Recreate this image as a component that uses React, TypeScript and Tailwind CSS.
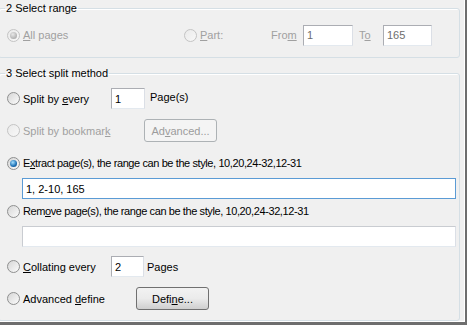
import React from 'react';

type RadioProps = { checked?: boolean; disabled?: boolean };

const Radio: React.FC<RadioProps> = ({ checked, disabled }) => (
  <span
    className={`relative inline-flex h-[13px] w-[13px] shrink-0 items-center justify-center rounded-full border ${
      disabled
        ? 'border-[#c4c4c4] bg-gradient-to-br from-[#eaeaea] to-[#f8f8f8]'
        : 'border-[#8e8f8f] bg-gradient-to-br from-[#d6d6d6] to-[#fbfbfb]'
    }`}
  >
    {checked && (
      <span
        className={`h-[7px] w-[7px] rounded-full ${
          disabled
            ? 'bg-[radial-gradient(circle_at_40%_35%,#e8e8e8,#9a9a9a)]'
            : 'bg-[radial-gradient(circle_at_40%_35%,#a6e0ff,#1b6fb4_60%,#0b3d73)]'
        }`}
      />
    )}
  </span>
);

const Label: React.FC<{ children: React.ReactNode; disabled?: boolean; className?: string }> = ({
  children,
  disabled,
  className = '',
}) => (
  <span className={`ml-[3px] whitespace-nowrap ${disabled ? 'text-[#a0a0a0]' : 'text-black'} ${className}`}>
    {children}
  </span>
);

const Input: React.FC<{ value?: string; className?: string; focused?: boolean; disabled?: boolean }> = ({
  value,
  className = '',
  focused,
  disabled,
}) => (
  <div
    className={`flex h-[21px] items-center border bg-white px-[3px] ${
      focused ? 'border-[#5b9bd5]' : 'border-[#abadb3] border-b-[#e3e9ef] border-r-[#dbdfe6]'
    } ${disabled ? 'text-[#6d6d6d]' : 'text-black'} ${className}`}
  >
    {value}
  </div>
);

const Btn: React.FC<{ children: React.ReactNode; disabled?: boolean }> = ({ children, disabled }) => (
  <div
    className={`flex h-[23px] w-[73px] items-center justify-center rounded-[3px] border ${
      disabled
        ? 'border-[#adb2b5] bg-[#f4f4f4] text-[#9c9c9c]'
        : 'border-[#707070] bg-gradient-to-b from-[#f2f2f2] via-[#ebebeb] to-[#cfcfcf] text-black'
    }`}
  >
    {children}
  </div>
);

const Group: React.FC<{ title: string; className?: string; children: React.ReactNode }> = ({
  title,
  className = '',
  children,
}) => (
  <fieldset
    className={`relative ml-[-2px] mr-[4px] rounded-[3px] border border-[#d5dfe5] shadow-[inset_1px_1px_0_#ffffff] ${className}`}
  >
    <legend className="ml-[6px] px-[1px] leading-[14px] text-black">{title}</legend>
    {children}
  </fieldset>
);

export default function App() {
  return (
    <div
      className="relative h-[325px] w-[467px] overflow-hidden bg-[#f0f0f0] text-[11px] leading-[14px]"
      style={{ fontFamily: '"Liberation Sans", Arial, sans-serif' }}
    >
      <div className="h-[322px] w-[465px] border-r border-b border-r-white border-b-white pt-[1px]">
        <Group title="2 Select range" className="h-[57px]">
          <div className="mt-[10px] flex h-[20px] items-center pl-[8px]">
            <div className="flex w-[177px] items-center">
              <Radio checked disabled />
              <Label disabled>
                <u>A</u>ll pages
              </Label>
            </div>
            <div className="flex w-[87px] items-center">
              <Radio disabled />
              <Label disabled>
                <u>P</u>art:
              </Label>
            </div>
            <span className="w-[32px] text-[#a0a0a0]">
              Fro<u>m</u>
            </span>
            <Input value="1" disabled className="w-[50px]" />
            <span className="ml-[6px] w-[24px] text-[#a0a0a0]">
              T<u>o</u>
            </span>
            <Input value="165" disabled className="w-[49px]" />
          </div>
        </Group>

        <Group title="3 Select split method" className="mt-[8px] h-[255px]">
          <div className="flex flex-col pl-[8px]">
            <div className="mt-[8px] flex h-[21px] items-center">
              <div className="flex w-[104px] items-center">
                <Radio />
                <Label>
                  Split by <u>e</u>very
                </Label>
              </div>
              <Input value="1" className="w-[34px]" />
              <span className="ml-[5px] -mt-[3px]">Page(s)</span>
            </div>
            <div className="mt-[10px] flex h-[23px] items-center">
              <div className="flex w-[137px] items-center">
                <Radio disabled />
                <Label disabled>
                  Split by bookmar<u>k</u>
                </Label>
              </div>
              <Btn disabled>
                Ad<u>v</u>anced...
              </Btn>
            </div>
            <div className="mt-[13px] flex h-[16px] items-center">
              <Radio checked />
              <Label className="tracking-[-0.4px]">
                E<u>x</u>tract page(s), the range can be the style, 10,20,24-32,12-31
              </Label>
            </div>
            <Input value="1, 2-10, 165" focused className="ml-[15px] mt-[7px] w-[434px]" />
            <div className="mt-[4px] flex h-[16px] items-center">
              <Radio />
              <Label className="tracking-[-0.4px]">
                Rem<u>o</u>ve page(s), the range can be the style, 10,20,24-32,12-31
              </Label>
            </div>
            <Input className="ml-[15px] mt-[7px] w-[434px] border-[#c9ccd1]" />
            <div className="mt-[9px] flex h-[21px] items-center">
              <div className="flex w-[104px] items-center">
                <Radio />
                <Label>
                  <u>C</u>ollating every
                </Label>
              </div>
              <Input value="2" className="w-[33px]" />
              <span className="ml-[3px]">Pages</span>
            </div>
            <div className="mt-[10px] flex h-[23px] items-center">
              <div className="flex w-[129px] items-center">
                <Radio />
                <Label>
                  Advanced <u>d</u>efine
                </Label>
              </div>
              <Btn>
                Defi<u>n</u>e...
              </Btn>
            </div>
          </div>
        </Group>
      </div>
      <div className="absolute right-0 top-0 h-full w-[2px] bg-[#6e6e6e]" />
      <div className="absolute bottom-0 left-0 h-[3px] w-full bg-[#6e6e6e]" />
    </div>
  );
}
